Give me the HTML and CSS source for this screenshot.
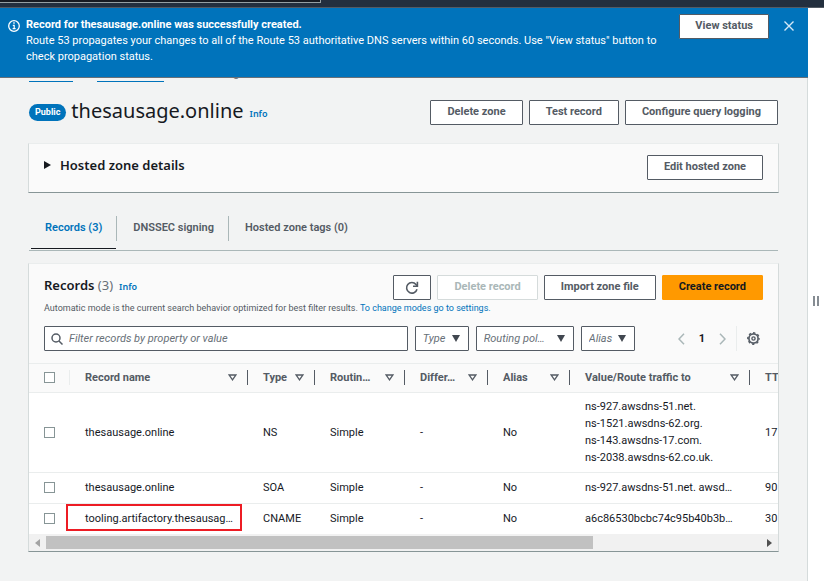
FILE: index.html
```html
<!DOCTYPE html>
<html lang="en">
<head>
<meta charset="utf-8">
<title>Route 53 Console</title>
<link rel="stylesheet" href="styles.css">
</head>
<body>
<header class="topbar"><div class="topbar-search"></div></header>
<div class="shell">
  <main class="content">
    <section class="flash">
      <svg class="flash-icon" width="12" height="12" viewBox="0 0 12 12" fill="none" stroke="#fff"><circle cx="6" cy="6" r="5.3" stroke-width="1.3"/><path d="M4.8 5.3h1.4v3.2M4.6 8.7h3" stroke-width="1.2"/><path d="M5.3 3h1.4" stroke-width="1.4"/></svg>
      <div class="flash-text">
        <strong>Record for thesausage.online was successfully created.</strong>
        <p>Route 53 propagates your changes to all of the Route 53 authoritative DNS servers within 60 seconds. Use "View status" button to check propagation status.</p>
      </div>
      <button class="btn flash-btn">View status</button>
      <button class="icon-btn flash-close" aria-label="Dismiss"><svg width="10" height="10" viewBox="0 0 10 10" fill="none" stroke="#d5e9f7" stroke-width="1.4"><path d="M.5.5l9 9M9.5.5l-9 9"/></svg></button>
    </section>
    <div class="page">
      <nav class="crumbs" aria-label="Breadcrumb"><a href="#">Route 53</a><span class="sep"><svg width="6" height="8" viewBox="0 0 6 8" fill="none" stroke="#687078" stroke-width="1.4"><path d="M1 0l4 4-4 4"/></svg></span><a href="#">Hosted zones</a><span class="sep"><svg width="6" height="8" viewBox="0 0 6 8" fill="none" stroke="#687078" stroke-width="1.4"><path d="M1 0l4 4-4 4"/></svg></span><span>thesausage.online</span></nav>
      <div class="title-row">
        <span class="pill">Public</span>
        <h1>thesausage.online</h1>
        <a class="info" href="#">Info</a>
        <div class="actions">
          <button class="btn">Delete zone</button>
          <button class="btn">Test record</button>
          <button class="btn">Configure query logging</button>
        </div>
      </div>
      <section class="card details">
        <button class="expander"><svg width="7" height="8" viewBox="0 0 7 8"><path d="M0 0l7 4-7 4z" fill="#16191f"/></svg>Hosted zone details</button>
        <button class="btn">Edit hosted zone</button>
      </section>
      <nav class="tabs">
        <a class="tab active" href="#">Records (3)</a>
        <a class="tab" href="#">DNSSEC signing</a>
        <a class="tab" href="#">Hosted zone tags (0)</a>
      </nav>
      <section class="card records">
        <div class="records-head">
          <div class="head-row">
            <h2>Records <span class="count">(3)</span></h2>
            <a class="info" href="#">Info</a>
            <div class="actions">
              <button class="btn refresh" aria-label="Refresh"><svg width="14" height="14" viewBox="0 0 14 14" fill="none" stroke="#545b64" stroke-width="1.6"><path d="M12 8.200A5.300 5.300 0 1 1 11 3.500L12.300 5"/><path d="M12.400 .8v4.400H8"/></svg></button>
              <button class="btn" disabled>Delete record</button>
              <button class="btn">Import zone file</button>
              <button class="btn primary">Create record</button>
            </div>
          </div>
          <p class="hint">Automatic mode is the current search behavior optimized for best filter results. <a href="#">To change modes go to settings.</a></p>
          <div class="filters">
            <label class="search">
              <svg width="12" height="12" viewBox="0 0 12 12" fill="none" stroke="#545b64" stroke-width="1.5"><circle cx="5" cy="5" r="4"/><path d="M8 8l3.5 3.5"/></svg>
              <input type="text" aria-label="Filter records" placeholder="Filter records by property or value">
            </label>
            <div class="pick"><select aria-label="Type"><option>Type</option></select><svg width="8" height="7" viewBox="0 0 8 7"><path d="M0 0h8L4 7z" fill="#414750"/></svg></div>
            <div class="pick wide"><select aria-label="Routing policy"><option>Routing pol…</option></select><svg width="8" height="7" viewBox="0 0 8 7"><path d="M0 0h8L4 7z" fill="#414750"/></svg></div>
            <div class="pick"><select aria-label="Alias"><option>Alias</option></select><svg width="8" height="7" viewBox="0 0 8 7"><path d="M0 0h8L4 7z" fill="#414750"/></svg></div>
            <div class="pager">
              <button class="icon-btn" aria-label="Previous page"><svg width="7" height="12" viewBox="0 0 7 12" fill="none" stroke="#aab7b8" stroke-width="1.5"><path d="M6 .7L1 6l5 5.300"/></svg></button>
              <span class="page-no">1</span>
              <button class="icon-btn" aria-label="Next page"><svg width="7" height="12" viewBox="0 0 7 12" fill="none" stroke="#aab7b8" stroke-width="1.5"><path d="M1 .7L6 6l-5 5.300"/></svg></button>
              <button class="icon-btn gear" aria-label="Preferences"><svg width="13" height="13" viewBox="0 0 13 13" fill="none" stroke="#545b64"><circle cx="6.500" cy="6.500" r="4.600" stroke-width="1.700"/><circle cx="6.500" cy="6.500" r="5.700" stroke-width="1.400" stroke-dasharray="2.240 2.240" stroke-dashoffset="1.120"/><circle cx="6.500" cy="6.500" r="1.600" stroke-width="1.400"/></svg></button>
            </div>
          </div>
        </div>
        <div class="table-wrap">
          <table>
            <colgroup><col class="c-check"><col class="c-name"><col class="c-type"><col class="c-routing"><col class="c-differ"><col class="c-alias"><col class="c-value"><col class="c-ttl"></colgroup>
            <thead>
              <tr>
                <th><div class="th light"><input type="checkbox" aria-label="Select all"></div></th>
                <th><div class="th">Record name<svg width="9" height="7" viewBox="0 0 9 7"><path d="M1.200 1h6.600L4.500 5.800z"/></svg></div></th>
                <th><div class="th">Type<svg width="9" height="7" viewBox="0 0 9 7"><path d="M1.200 1h6.600L4.500 5.800z"/></svg></div></th>
                <th><div class="th">Routin…<svg width="9" height="7" viewBox="0 0 9 7"><path d="M1.200 1h6.600L4.500 5.800z"/></svg></div></th>
                <th><div class="th">Differ…<svg width="9" height="7" viewBox="0 0 9 7"><path d="M1.200 1h6.600L4.500 5.800z"/></svg></div></th>
                <th><div class="th">Alias<svg width="9" height="7" viewBox="0 0 9 7"><path d="M1.200 1h6.600L4.500 5.800z"/></svg></div></th>
                <th><div class="th">Value/Route traffic to<svg width="9" height="7" viewBox="0 0 9 7"><path d="M1.200 1h6.600L4.500 5.800z"/></svg></div></th>
                <th><div class="th">TT</div></th>
              </tr>
            </thead>
            <tbody>
              <tr><td><input type="checkbox" aria-label="Select NS record"></td><td>thesausage.online</td><td>NS</td><td>Simple</td><td>-</td><td>No</td><td>ns-927.awsdns-51.net.<br>ns-1521.awsdns-62.org.<br>ns-143.awsdns-17.com.<br>ns-2038.awsdns-62.co.uk.</td><td>17</td></tr>
              <tr><td><input type="checkbox" aria-label="Select SOA record"></td><td>thesausage.online</td><td>SOA</td><td>Simple</td><td>-</td><td>No</td><td>ns-927.awsdns-51.net. awsd…</td><td>90</td></tr>
              <tr><td><input type="checkbox" aria-label="Select CNAME record"></td><td class="marked">tooling.artifactory.thesausag…</td><td>CNAME</td><td>Simple</td><td>-</td><td>No</td><td>a6c86530bcbc74c95b40b3b…</td><td>30</td></tr>
            </tbody>
          </table>
        </div>
        <div class="scrollbar">
          <svg width="5" height="8" viewBox="0 0 5 8"><path d="M5 0v8L0 4z" fill="#a3a3a3"/></svg>
          <div class="track"><div class="thumb"></div></div>
          <svg width="5" height="8" viewBox="0 0 5 8"><path d="M0 0v8l5-4z" fill="#505050"/></svg>
        </div>
      </section>
    </div>
  </main>
  <aside class="splitter"><svg width="6" height="10" viewBox="0 0 6 10"><path d="M1 0v10M5 0v10" stroke="#687078" stroke-width="1.600"/></svg></aside>
</div>
</body>
</html>
```

FILE: styles.css
```css
*, *::before, *::after { box-sizing: border-box; }
body {
  margin: 0;
  min-height: 100vh;
  display: flex;
  flex-direction: column;
  font: 11px/16px Roboto, "Open Sans", sans-serif;
  color: #16191f;
  background: #fff;
}
h1, h2, p { margin: 0; }
a { color: #0073bb; text-decoration: none; }
button, input, select { font: inherit; color: inherit; margin: 0; }
svg { display: block; flex: none; }

.topbar { height: 8px; background: #232f3e; border-bottom: 1px solid #545b64; }
.topbar-search { width: 39%; height: 3px; background: #161b22; border: solid #95a0a3; border-width: 0 1px 1px 0; }
.shell { flex: 1; display: flex; }
.content { flex: 1; min-width: 0; background: #f2f3f3; border-right: 1px solid #d5dbdb; }
.splitter { width: 16px; flex: none; display: flex; align-items: center; justify-content: center; padding-top: 12px; }

.flash {
  position: relative;
  z-index: 1;
  display: flex;
  align-items: flex-start;
  padding: 6px 14px 12px 8px;
  margin-right: -1px;
  color: #fff;
  background: #0073bb;
  border-bottom: 1px solid #687078;
}
.flash-icon { margin: 6px 6px 0 0; }
.flash-text { flex: 1; padding: 3px 20px 0 0; }
.flash-text strong { display: block; font-weight: 700; }
.icon-btn { display: flex; align-items: center; border: 0; padding: 0; background: none; }
.flash-close { margin: 7px 0 0 15px; }

.btn {
  height: 25px;
  padding: 0 16px 1px;
  border: 1px solid #545b64;
  border-radius: 1px;
  background: #fff;
  color: #545b64;
  font-weight: 700;
  white-space: nowrap;
}
.btn:disabled { color: #aab7b8; border-color: #d5dbdb; }
.primary { background: #ff9900; border-color: #ff9900; color: #16191f; }
.refresh { padding: 0 11px; }
.flash-btn { padding: 0 15px 1px; }

.page { padding: 0 29px; }
.crumbs { display: flex; align-items: center; height: 16px; margin-top: -12px; color: #687078; }
.crumbs a { height: 16px; border-bottom: 1px solid #0073bb; }
.sep { padding: 0 9px; }

.title-row { display: flex; align-items: center; margin-top: 14px; }
.pill { padding: 0 6px; line-height: 17px; border-radius: 9px; background: #0073bb; color: #fff; font-size: 9px; font-weight: 700; }
h1 { font: 400 20px/30px "Noto Sans", sans-serif; margin: 0 6px 2px 5px; }
.info { font: 600 9px/16px "Noto Sans", sans-serif; padding-top: 4px; }
.actions { display: flex; gap: 6px; margin-left: auto; }

.card { margin: 0 -1px; background: #fafafa; border: 1px solid #d5dbdb; border-top-color: #eaeded; border-bottom-color: #879596; }
.details { display: flex; align-items: flex-start; justify-content: space-between; height: 50px; margin-top: 15px; padding: 11px 15px; }
.expander { display: flex; align-items: center; gap: 9px; padding: 0; border: 0; background: none; font: 600 13px/20px "Noto Sans", sans-serif; }

.tabs { display: flex; margin-top: 20px; height: 38px; border-bottom: 1px solid #aab7b8; }
.tab { position: relative; height: 25px; margin-top: 3px; padding: 4px 14px 4px 16px; color: #545b64; font-weight: 600; }
.tab + .tab { border-left: 1px solid #aab7b8; }
.active { color: #0073bb; }
.active::after { content: ""; position: absolute; left: 2px; right: 0; bottom: -8px; height: 1px; background: #16191f; }

.records { margin-top: 12px; overflow: hidden; }
.records-head { padding: 11px 15px 12px; }
.head-row { display: flex; align-items: flex-start; }
h2 { font: 600 13px/20px "Noto Sans", sans-serif; margin-right: 6px; }
.count { font-weight: 400; color: #687078; }
.hint { font-size: 9px; line-height: 16px; color: #545b64; }
.filters { display: flex; gap: 7px; margin-top: 10px; }
.search { flex: 1; display: flex; align-items: center; gap: 6px; height: 25px; padding: 0 6px; background: #fff; border: 1px solid #545b64; border-radius: 1px; }
.search input { flex: 1; min-width: 0; padding: 0; border: 0; outline: 0; background: none; }
.search input::placeholder { color: #687078; font-style: italic; }
.pick { position: relative; width: 54px; }
.wide { width: 98px; }
.pick select { appearance: none; width: 100%; height: 25px; padding: 0 7px; border: 1px solid #545b64; border-radius: 1px; background: #fff; color: #687078; font-style: italic; }
.pick svg { position: absolute; right: 9px; top: 9px; pointer-events: none; }
.pager { display: flex; align-items: center; margin-left: 36px; }
.page-no { padding: 0 14px; font-weight: 700; }
.gear { height: 25px; margin-left: 10px; padding: 0 3px 0 10px; border-left: 1px solid #eaeded; }

.table-wrap { overflow: hidden; border-top: 1px solid #eaeded; background: #fff; }
table { table-layout: fixed; width: 820px; border-collapse: collapse; }
.c-check { width: 41px; }
.c-name { width: 178px; }
.c-type { width: 67px; }
.c-routing { width: 90px; }
.c-differ { width: 83px; }
.c-alias { width: 82px; }
.c-value { width: 180px; }
th, td { padding: 0; text-align: left; border-bottom: 1px solid #eaeded; white-space: nowrap; }
th { height: 28px; background: #fafafa; color: #545b64; font-weight: 700; }
.th { display: flex; align-items: center; justify-content: space-between; height: 15px; padding: 0 10px 0 15px; border-right: 1px solid #545b64; }
.th.light { border-color: #eaeded; }
.th svg { fill: none; stroke: #545b64; stroke-width: 1.300; }
td { height: 31px; padding: 0 0 0 15px; line-height: 17px; }
tbody tr:first-child td { height: 80px; }
tbody tr:last-child td { border-bottom: 0; }
input[type="checkbox"] { appearance: none; display: block; width: 11px; height: 11px; border: 1px solid #879596; background: #fff; }
.marked { position: relative; }
.marked::after { content: ""; position: absolute; left: -4px; top: 0; width: 176px; height: 27px; border: 2px solid #ed1c24; }

.scrollbar { display: flex; align-items: center; gap: 6px; height: 17px; padding: 0 6px; background: #f1f1f1; }
.track { flex: 1; }
.thumb { width: 76.5%; height: 13px; background: #c1c1c1; }
```
